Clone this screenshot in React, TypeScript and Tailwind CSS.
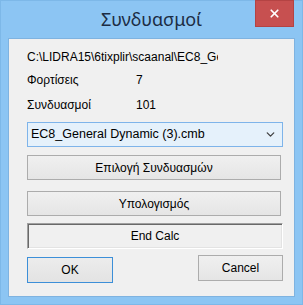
import { X, ChevronDown } from 'lucide-react';

const ui = "font-['Liberation_Sans',Arial,sans-serif] text-[12px] text-black";

export default function App() {
  return (
    <div className={`w-[303px] h-[305px] bg-[#8cc5f3] border border-[#7db8e8] flex flex-col ${ui}`}>
      {/* title bar */}
      <div className="relative h-[37px] flex items-center justify-center">
        <span className="font-['Noto_Sans',sans-serif] text-[18px] text-[#1c2d44]">Συνδυασμοί</span>
        <div className="absolute right-[8px] -top-px w-[39px] h-[27px] bg-[#c75050] border border-[#b44343] flex items-center justify-center">
          <X className="w-[13px] h-[13px] text-white" strokeWidth={3.2} />
        </div>
      </div>

      {/* client */}
      <div className="mx-[7px] h-[259px] bg-[#f0f0f0] border border-[#7fb3e0] flex flex-col px-[18px]">
        <div className="h-[20px] mt-[8px] flex items-center overflow-hidden whitespace-nowrap w-[191px]">
          C:\LIDRA15\6tixplir\scaanal\EC8_General Dynamic (3).cmb
        </div>
        <div className="h-[20px] mt-[3px] flex items-center">
          <span className="w-[109px]">Φορτίσεις</span>
          <span>7</span>
        </div>
        <div className="h-[20px] mt-[5px] flex items-center">
          <span className="w-[109px]">Συνδυασμοί</span>
          <span>101</span>
        </div>

        {/* combo */}
        <div className="mt-[7px] h-[25px] w-[256px] bg-[#e5f1fb] border border-[#7eb4ea] flex items-center pl-[3px] pr-[5px]">
          <span className="flex-1 text-[12.5px]">EC8_General Dynamic (3).cmb</span>
          <ChevronDown className="w-[13px] h-[13px] text-[#404040]" strokeWidth={2.4} />
        </div>

        <button className="mt-[8px] h-[25px] w-[254px] bg-gradient-to-b from-[#f0f0f0] to-[#e5e5e5] border border-[#acacac] flex items-center justify-center">
          Επιλογή Συνδυασμών
        </button>
        <button className="mt-[11px] h-[25px] w-[254px] bg-gradient-to-b from-[#f0f0f0] to-[#e5e5e5] border border-[#acacac] flex items-center justify-center">
          Υπολογισμός
        </button>

        {/* status */}
        <div className="mt-[7px] h-[26px] w-[256px] border border-t-[#a0a0a0] border-l-[#a0a0a0] border-r-white border-b-white shadow-[inset_1px_1px_0_#696969,inset_-1px_-1px_0_#e3e3e3] flex items-center justify-center">
          End Calc
        </div>

        <div className="mt-[6px] flex items-start justify-between w-[256px]">
          <button className="mt-[2px] h-[26px] w-[86px] bg-gradient-to-b from-[#ececec] to-[#e3e3e3] border border-[#3c8fd8] flex items-center justify-center">
            OK
          </button>
          <button className="h-[26px] w-[85px] bg-gradient-to-b from-[#f0f0f0] to-[#e5e5e5] border border-[#acacac] flex items-center justify-center">
            Cancel
          </button>
        </div>
      </div>
    </div>
  );
}
